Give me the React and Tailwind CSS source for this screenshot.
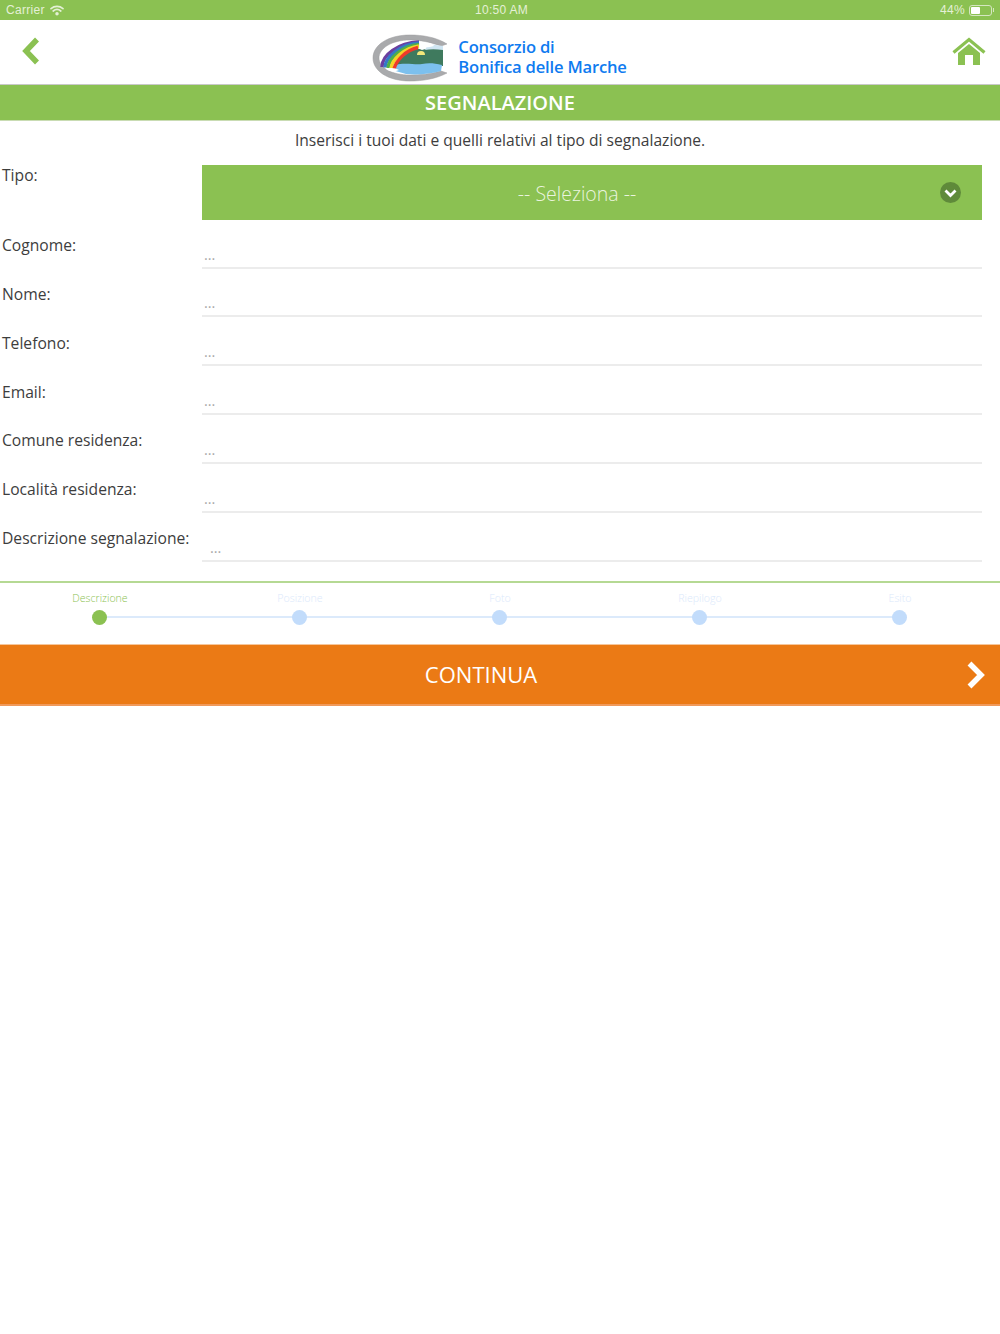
const fields = [
  { label: 'Cognome:' },
  { label: 'Nome:' },
  { label: 'Telefono:' },
  { label: 'Email:' },
  { label: 'Comune residenza:' },
  { label: 'Località residenza:' },
  { label: 'Descrizione segnalazione:', textarea: true },
];

const steps = ['Descrizione', 'Posizione', 'Foto', 'Riepilogo', 'Esito'];

const Logo = () => (
  <svg width="78" height="50" viewBox="0 0 78 50">
    <path d="M75 10 C64 3 50 1 38 1 C16 1 1 11 1 24 C1 37 16 47 38 47 C50 47 64 45 75 39 L69 37 C58 40 48 41 38 41 C20 41 7 34 7 24 C7 14 20 6 38 6 C48 6 58 8 69 12 Z" fill="#a9aaac" stroke="#9a9b9d" strokeWidth="0.5" />
    <path d="M28 19 C36 14 44 13 50 16 C56 14 62 14 71 15 L71 32 L24 32 Z" fill="#3f7a5e" />
    <path d="M56 10 L71 12 L71 16 C64 15 58 15 53 16 Z" fill="#cfe5f2" />
    <path d="M44 11 C47 8 52 8 54 9 C57 8 61 10 62 12 C56 14 49 14 44 11 Z" fill="#ffffff" />
    <path d="M45 21 a4 4 0 0 1 8 0 Z" fill="#f5e77a" />
    <path d="M22 31 C34 28 42 31 50 30 C56 29 62 29 70 31 L69 37 C58 40 46 41 34 40 L20 36 Z" fill="#7cc0ee" />
    <path d="M10 33 C10 21 26 9 47 8" fill="none" stroke="#6b3fa0" strokeWidth="3.4" />
    <path d="M13 33.5 C13.5 23 28 10.5 47 9" fill="none" stroke="#3478c8" strokeWidth="3.4" />
    <path d="M16 34 C17 24 30 12 47 10.5" fill="none" stroke="#4fae4a" strokeWidth="3.4" />
    <path d="M19 34.5 C20 25.5 32 14 47 12" fill="none" stroke="#f5d327" strokeWidth="3.4" />
    <path d="M22 35 C24 27 33 16.5 46 13.5" fill="none" stroke="#ee3a2a" strokeWidth="3.4" />
    <path d="M14 35 C18 33 24 34 27 36 C23 38 17 38 14 35 Z" fill="#ffffff" />
  </svg>
);

export default function App() {
  return (
    <div className="min-h-[1334px] bg-white font-['Open_Sans',sans-serif] text-[#3d3d3d]">
      <div className="h-5 bg-[#8bc152] flex items-center justify-between pl-[6px] pr-[6px] font-['Liberation_Sans',sans-serif] text-[12px] tracking-[0.3px] text-[#e4f0d6] relative">
        <div className="flex items-center gap-[5px]">
          <span>Carrier</span>
          <svg width="14" height="11" viewBox="0 0 14 11" fill="none" stroke="currentColor" strokeWidth="1.7" strokeLinecap="round">
            <path d="M1 3.6 C4.5 0.6 9.5 0.6 13 3.6" />
            <path d="M3.2 6 C5.4 4.2 8.6 4.2 10.8 6" />
            <circle cx="7" cy="8.8" r="0.9" fill="currentColor" />
          </svg>
        </div>
        <span className="absolute left-[475px] top-[3px] leading-[14px]">10:50 AM</span>
        <div className="flex items-center gap-[4px]">
          <span>44%</span>
          <div className="flex items-center gap-px">
            <div className="w-[23px] h-[11px] rounded-[3px] border border-[#d5e6c0] p-px">
              <div className="h-full w-[9px] bg-white rounded-[1px]" />
            </div>
            <div className="w-px h-[4px] bg-[#d5e6c0]" />
          </div>
        </div>
      </div>

      <div className="h-[65px] border-b border-[#c9c9c9] flex items-center justify-between pl-[22px] pr-[14px]">
        <svg width="18" height="28" viewBox="0 0 18 28" className="mb-[2px]">
          <path d="M15 2.5 L4 14 L15 25.5" fill="none" stroke="#8bc152" strokeWidth="5.5" />
        </svg>
        <div className="flex items-center gap-[8px] ml-[7px] mt-[14px]">
          <Logo />
          <div className="text-[#0f7bf0] text-[16.6px] leading-[20px] font-semibold tracking-[-0.2px] -mt-[4px]">
            <div className="h-5">Consorzio di</div>
            <div className="h-5">Bonifica delle Marche</div>
          </div>
        </div>
        <svg width="34" height="30" viewBox="0 0 34 30" className="mb-[1px]">
          <path d="M1.5 15.5 L17 2.5 L32.5 15.5" fill="none" stroke="#8bc152" strokeWidth="3.2" />
          <path d="M6 16 L17 7 L28 16 L28 28 L21 28 L21 18 L13 18 L13 28 L6 28 Z" fill="#8bc152" />
        </svg>
      </div>

      <div className="h-[36px] bg-[#8bc152] border-b border-[#c9dcb3] flex items-center justify-center text-white text-[20px] font-semibold">
        SEGNALAZIONE
      </div>

      <p className="text-center text-[15.6px] leading-[20px] mt-[9px]">
        Inserisci i tuoi dati e quelli relativi al tipo di segnalazione.
      </p>

      <div className="flex mt-[15px] pl-[2px] pr-[18px]">
        <label className="w-[200px] text-[15.65px] leading-[20px]">Tipo:</label>
        <div className="flex-1 h-[55px] bg-[#8bc152] flex items-center relative">
          <span className="w-full text-center pr-[30px] pt-[2px] text-[19.5px] font-light text-[#eaf4de]">-- Seleziona --</span>
          <div className="absolute right-[21px] top-[17px] w-[21px] h-[21px] rounded-full bg-[#5f8a3a] flex items-center justify-center">
            <svg width="13" height="10" viewBox="0 0 13 10">
              <path d="M1.5 2.5 L6.5 7.5 L11.5 2.5" fill="none" stroke="#fff" strokeWidth="2.8" />
            </svg>
          </div>
        </div>
      </div>

      <div className="flex flex-col">
        {fields.map((f) => (
          <div key={f.label} className="flex h-[48.83px] pl-[2px] pr-[18px]">
            <label className="w-[200px] text-[15.65px] leading-[20px] pt-[15.1px] whitespace-nowrap">{f.label}</label>
            <div className={`flex-1 border-b-2 border-[#ececec] flex items-end h-[48.6px] text-[#a8a8a8] text-[14.5px] leading-[16px] pb-[4px] ${f.textarea ? 'pl-[8px]' : 'pl-[2px]'}`}>
              ...
            </div>
          </div>
        ))}
      </div>

      <div className="border-t-2 border-[#b5d993] mt-[19.5px] h-[63px] flex relative">
        <div className="absolute left-[100px] right-[100px] top-[33px] h-[2px] bg-[#dceafb]" />
        {steps.map((s, i) => (
          <div key={s} className="w-[200px] flex flex-col items-center relative">
            <span className={`text-[10.6px] leading-[14px] mt-[8px] font-light ${i === 0 ? 'text-[#8bc152]' : 'text-[#dbe9fb]'}`}>{s}</span>
            <div className={`w-[15px] h-[15px] rounded-full mt-[5px] mr-px ${i === 0 ? 'bg-[#8bc152]' : 'bg-[#c2dcfb]'}`} />
          </div>
        ))}
      </div>

      <div className="h-[62px] bg-[#eb7a15] border-t border-[#f6c69b] border-b-2 border-b-[#f0995a] flex items-center justify-center relative">
        <span className="text-white text-[22px] font-medium pr-[38px]">CONTINUA</span>
        <svg width="20" height="28" viewBox="0 0 20 28" className="absolute right-[14px] top-[16px]">
          <path d="M3.5 2.5 L15 14 L3.5 25.5" fill="none" stroke="#fff" strokeWidth="5.5" />
        </svg>
      </div>
    </div>
  );
}
